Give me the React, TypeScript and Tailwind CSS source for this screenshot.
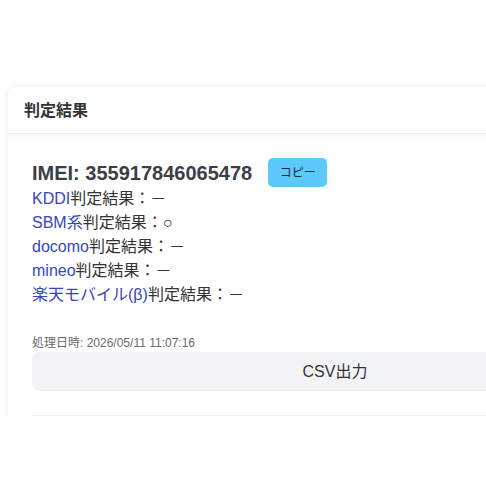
export default function App() {
  const results = [
    { name: 'KDDI', value: '－' },
    { name: 'SBM系', value: '○' },
    { name: 'docomo', value: '－' },
    { name: 'mineo', value: '－' },
    { name: '楽天モバイル(β)', value: '－' },
  ];

  return (
    <div className="w-[486px] h-[486px] bg-white overflow-hidden font-['Liberation_Sans','Noto_Sans_CJK_JP',sans-serif]">
      <div className="h-[417px] overflow-hidden pt-[87px] pl-2">
        {/* Result card */}
        <div className="w-[654px] bg-white rounded-lg shadow-[0_0_6px_rgba(0,0,0,0.08)]">
          <div className="h-[47px] flex items-center px-4 border-b border-[#ececec] shadow-[0_2px_3px_rgba(0,0,0,0.04)]">
            <h2 className="text-[16px] font-bold text-[#333] pt-px">判定結果</h2>
          </div>
          <div className="px-6 pt-[24px] pb-6">
            <div className="flex items-center">
              <span className="text-[20px] font-bold text-[#3a3f45] leading-[28px]">IMEI: 355917846065478</span>
              <button className="ml-4 w-[59px] h-[29px] rounded-[5px] bg-[#5cc9fa] text-[12px] text-[#1d2a36]">
                コピー
              </button>
            </div>
            <ul>
              {results.map((r) => (
                <li key={r.name} className="text-[16px] leading-[24px] text-[#333]">
                  <a href="#" className="text-[#3546c2]">{r.name}</a>
                  判定結果：{r.value}
                </li>
              ))}
            </ul>
            <p className="mt-[28px] text-[12px] leading-[16px] text-[#6b6b6b]">処理日時: 2026/05/11 11:07:16</p>
            <button className="mt-[1px] w-full h-[39px] rounded-lg bg-[#f2f3f5] text-[16px] text-[#333]">
              CSV出力
            </button>
            <div className="mt-[24px] border-t border-[#ececec]" />
            <div className="h-[80px]" />
          </div>
        </div>
      </div>
    </div>
  );
}
